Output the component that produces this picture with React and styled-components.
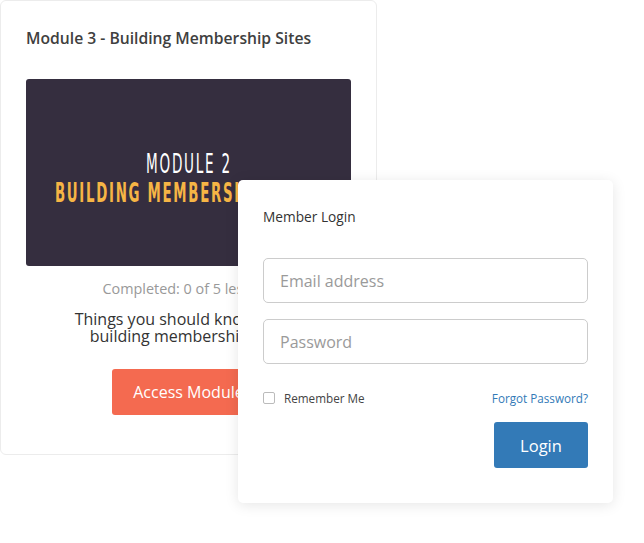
import React from 'react';
import styled, { createGlobalStyle } from 'styled-components';

const GlobalStyle = createGlobalStyle`
  body {
    margin: 0;
    background: #fff;
    font-family: "Open Sans", "Liberation Sans", sans-serif;
  }
`;

const Stage = styled.div`
  position: relative;
  width: 644px;
  height: 543px;
`;

const ModuleCard = styled.div`
  box-sizing: border-box;
  width: 377px;
  height: 455px;
  border: 1px solid #ececec;
  border-radius: 6px;
  padding: 0 25px;
  display: flex;
  flex-direction: column;
  align-items: center;
`;

const ModuleTitle = styled.h3`
  align-self: flex-start;
  margin: 26px 0 0;
  font-size: 15.7px;
  line-height: 22px;
  font-weight: 600;
  color: #404040;
`;

const Cover = styled.div`
  margin-top: 30px;
  width: 325px;
  height: 187px;
  border-radius: 3px;
  background: #352e3f;
  display: flex;
  flex-direction: column;
  align-items: center;
  justify-content: center;
  padding-top: 12px;
  box-sizing: border-box;
  overflow: hidden;
`;

const CoverLine = styled.div`
  font-family: "DejaVu Sans Condensed", "DejaVu Sans", sans-serif;
  font-size: 26px;
  line-height: 29px;
  white-space: nowrap;
  letter-spacing: ${p => p.$spacing}px;
  font-weight: ${p => (p.$bold ? 700 : 200)};
  color: ${p => p.$color};
  transform: scaleX(${p => p.$scale});
`;

const Progress = styled.div`
  margin-top: 13px;
  font-size: 14.4px;
  line-height: 20px;
  color: #999;
`;

const Summary = styled.div`
  margin-top: 12px;
  font-size: 16px;
  line-height: 17px;
  color: #333;
  text-align: center;
`;

const AccessButton = styled.button`
  margin-top: 24px;
  width: 154px;
  height: 46px;
  border: 0;
  border-radius: 3px;
  background: #f46a50;
  color: #fff;
  font-family: inherit;
  font-size: 16px;
`;

const LoginCard = styled.div`
  position: absolute;
  left: 238px;
  top: 180px;
  box-sizing: border-box;
  width: 375px;
  height: 323px;
  background: #fff;
  border-radius: 5px;
  box-shadow: 0 2px 14px rgba(0, 0, 0, 0.1);
  padding: 28px 25px 0;
  display: flex;
  flex-direction: column;
`;

const LoginTitle = styled.div`
  font-size: 13.7px;
  line-height: 18px;
  color: #333;
`;

const Field = styled.input`
  box-sizing: border-box;
  width: 325px;
  height: 45px;
  margin-top: ${p => p.$top}px;
  border: 1px solid #ccc;
  border-radius: 5px;
  padding: 0 16px;
  font-family: inherit;
  font-size: 16px;
  color: #333;
  outline: none;

  &::placeholder {
    color: #9a9a9a;
  }
`;

const OptionsRow = styled.div`
  margin-top: 26px;
  display: flex;
  align-items: center;
  justify-content: space-between;
  font-size: 11.7px;
  line-height: 16px;
`;

const Remember = styled.label`
  display: flex;
  align-items: center;
  gap: 9px;
  color: #444;
`;

const Box = styled.span`
  box-sizing: border-box;
  width: 12px;
  height: 12px;
  border: 1px solid #bbb;
  border-radius: 2px;
`;

const Forgot = styled.a`
  color: #337ab7;
  text-decoration: none;
`;

const LoginButton = styled.button`
  align-self: flex-end;
  margin-top: 16px;
  width: 94px;
  height: 46px;
  border: 0;
  border-radius: 3px;
  background: #337ab7;
  color: #fff;
  font-family: inherit;
  font-size: 16.5px;
`;

export default function App() {
  return (
    <Stage>
      <GlobalStyle />
      <ModuleCard>
        <ModuleTitle>Module 3 - Building Membership Sites</ModuleTitle>
        <Cover>
          <CoverLine $color="#fff" $spacing={3} $scale={0.58}>MODULE 2</CoverLine>
          <CoverLine $color="#f6b545" $bold $spacing={3} $scale={0.57}>BUILDING MEMBERSHIP SITES</CoverLine>
        </Cover>
        <Progress>Completed: 0 of 5 lessons</Progress>
        <Summary>
          Things you should know about
          <br />
          building membership sites
        </Summary>
        <AccessButton>Access Module</AccessButton>
      </ModuleCard>

      <LoginCard>
        <LoginTitle>Member Login</LoginTitle>
        <Field $top={32} placeholder="Email address" />
        <Field $top={16} type="password" placeholder="Password" />
        <OptionsRow>
          <Remember>
            <Box />
            Remember Me
          </Remember>
          <Forgot href="#">Forgot Password?</Forgot>
        </OptionsRow>
        <LoginButton>Login</LoginButton>
      </LoginCard>
    </Stage>
  );
}
